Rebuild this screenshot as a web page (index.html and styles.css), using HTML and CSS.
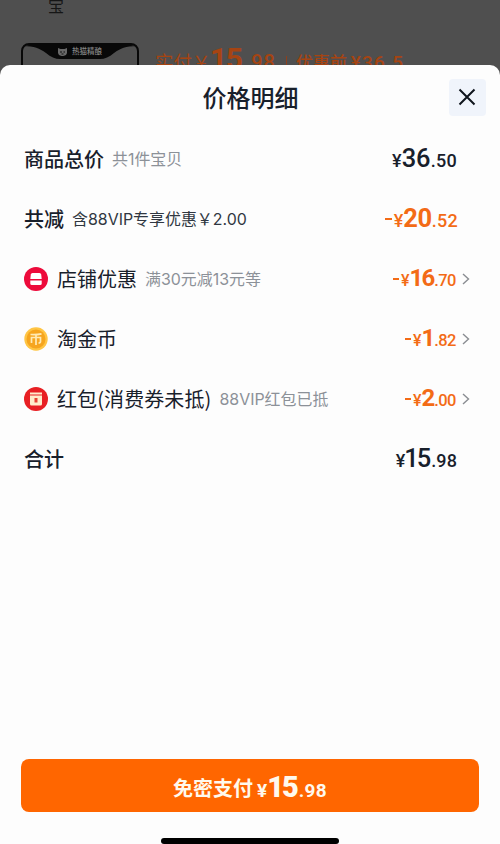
FILE: index.html
```html
<!DOCTYPE html>
<html lang="zh-CN">
<head>
<meta charset="utf-8">
<meta name="viewport" content="width=device-width, initial-scale=1">
<title>价格明细</title>
<link rel="stylesheet" href="styles.css">
</head>
<body>
<div class="screen">
  <header class="backdrop">
    <div class="address">宝</div>
    <div class="product">
      <div class="thumb">
        <svg class="notch" viewBox="0 0 118 24" width="118" height="24"><path d="M0 0H118V1C105 1 100 3 93 8C88 12 84 14 79 14H39C34 14 30 12 25 8C18 3 13 1 0 1Z" fill="#080808"/><path d="M37 3L39.500 4H43.500L46 3V7.500C46 10 43.500 11 41.500 11S37 10 37 7.500Z" fill="#686868"/><path d="M39 7H41M42.500 7H44M40.500 9H42.500" stroke="#111"/></svg>
        <span class="thumb-label">热猫精酿</span>
      </div>
      <div class="paid"><span class="paid-label">实付￥</span><span class="paid-int">15</span><span class="paid-dec">.98</span><span class="bar"></span><span class="before">优惠前 <i>¥36.5</i></span></div>
    </div>
  </header>
  <main class="sheet">
    <div class="head">
      <h1>价格明细</h1>
      <button class="close" aria-label="关闭"><svg width="18" height="18" viewBox="0 0 18 18"><path d="M1.500 1.500L16.500 16.500M16.500 1.500L1.500 16.500" stroke="#10151d" stroke-width="2"/></svg></button>
    </div>
    <div class="rows">
      <div class="row"><span class="name strong">商品总价</span><span class="note">共1件宝贝</span><span class="price"><i class="yen">¥</i><b>36</b><i class="dec">.50</i></span></div>
      <div class="row"><span class="name strong">共减</span><span class="note dark">含88VIP专享优惠￥2.00</span><span class="price off large"><i class="minus"></i><i class="yen">¥</i><b>20</b><i class="dec">.52</i></span></div>
      <div class="row"><svg class="icon" viewBox="0 0 24 24"><circle cx="12" cy="12" r="12" fill="#ed0b3b"/><path d="M8.500 6H15.500Q17 6 17.200 7.500L17.700 12H6.300L6.800 7.500Q7 6 8.500 6Z" fill="#fff"/><path d="M6.300 13.500H17.700V16.500Q17.700 18 16.200 18H7.800Q6.300 18 6.300 16.500Z" fill="#fff"/></svg><span class="name">店铺优惠</span><span class="note">满30元减13元等</span><span class="price off small"><i class="minus"></i><i class="yen">¥</i><b>16</b><i class="dec">.70</i></span><svg class="arrow" viewBox="0 0 8 12"><path d="M1 1L6.500 6L1 11"/></svg></div>
      <div class="row"><svg class="icon" viewBox="0 0 24 24"><circle cx="12" cy="12" r="11.700" fill="#ffc544"/><circle cx="12" cy="12" r="9.500" fill="#f6a51e"/><path d="M6.500 7.500Q12 8 17.500 6.800M7.500 16V10.500H16.500V14.500Q16.500 16 14.500 16M12 8V18" fill="none" stroke="#ffeab5" stroke-width="1.700"/></svg><span class="name">淘金币</span><span class="price off small"><i class="minus"></i><i class="yen">¥</i><b>1</b><i class="dec">.82</i></span><svg class="arrow" viewBox="0 0 8 12"><path d="M1 1L6.500 6L1 11"/></svg></div>
      <div class="row"><svg class="icon" viewBox="0 0 24 24"><circle cx="12" cy="12" r="12" fill="#e82024"/><path d="M6 5.500H18V7.500H6ZM6 8.500H18V17Q18 18.500 16.500 18.500H7.500Q6 18.500 6 17Z" fill="#ffedcc"/><path d="M10.500 11H13.500V15.500H10.500Z" fill="#e84436"/></svg><span class="name wide">红包(消费券未抵)</span><span class="note">88VIP红包已抵</span><span class="price off small"><i class="minus"></i><i class="yen">¥</i><b>2</b><i class="dec">.00</i></span><svg class="arrow" viewBox="0 0 8 12"><path d="M1 1L6.500 6L1 11"/></svg></div>
      <div class="row"><span class="name strong">合计</span><span class="price total"><i class="yen">¥</i><b>15</b><i class="dec">.98</i></span></div>
    </div>
    <button class="pay"><span>免密支付</span><span class="pay-price"><i class="yen">¥</i><b>15</b><i class="dec">.98</i></span></button>
    <div class="home"></div>
  </main>
</div>
</body>
</html>
```
FILE: styles.css
```css
* { box-sizing: border-box; }
body { margin: 0; font-family: "Noto Sans CJK SC", sans-serif; color: #18202b; background: #4f4f4f; }
h1 { margin: 0; }
i { font-style: normal; }
button { border: 0; padding: 0; font: inherit; color: inherit; }
.screen { height: 844px; overflow: hidden; display: flex; flex-direction: column; background: #4f4f4f; }
.backdrop { height: 65px; flex: none; overflow: visible; }
.address { height: 43px; padding-left: 48px; font-size: 16px; line-height: 10px; color: #161616; }
.product { height: 40px; display: flex; }
.thumb { position: relative; width: 118px; height: 50px; margin-left: 21px; border: 2px solid #080808; border-radius: 8px 8px 0 0; overflow: hidden; flex: none; }
.notch { display: block; margin-left: -2px; }
.thumb-label { position: absolute; left: 49px; top: 1px; font-size: 7.5px; line-height: 10px; font-weight: 500; color: #858585; white-space: nowrap; }
.paid { display: flex; align-items: baseline; height: 34px; margin-left: 16px; padding-top: 1px; color: #a64412; line-height: 34px; white-space: nowrap; }
.paid-label { font-size: 18.5px; width: 54px; }
.paid-int { font: 700 30px/30px Roboto, sans-serif; width: 32px; margin-left: 1px; letter-spacing: -1.5px; }
.paid-dec { font: 500 20px/30px Roboto, sans-serif; width: 39px; padding-left: 3px; letter-spacing: .8px; }
.bar { width: 1px; height: 13px; background: #8e401c; margin: 0 9px 0 5px; }
.before { font-size: 17px; font-weight: 500; }
.before i { font-family: Roboto, sans-serif; font-size: 19px; letter-spacing: 1.1px; }
.sheet { position: relative; flex: 1; display: flex; flex-direction: column; background: #fdfdfd; border-radius: 10px 10px 0 0; }
.head { height: 64px; display: flex; align-items: center; padding-right: 14px; flex: none; }
.head h1 { flex: 1; padding-left: 52px; text-align: center; font-size: 24px; font-weight: 500; line-height: 34px; }
.close { width: 37px; height: 37px; display: flex; align-items: center; justify-content: center; background: #f0f4fb; border-radius: 4px; padding-right: 1px; }
.row { height: 60px; display: flex; align-items: center; padding: 0 30px 0 24px; white-space: nowrap; }
.name { font-size: 20px; line-height: 30px; }
.wide { letter-spacing: .1px; }
.strong { font-weight: 500; }
.note { margin-left: 8px; font-family: Inter, "Noto Sans CJK SC", sans-serif; font-size: 15.95px; line-height: 24px; color: #8c9198; padding-top: 2px; }
.dark { color: #303741; }
.icon { width: 24px; height: 24px; margin-right: 9px; flex: none; }
.price { width: 90px; margin-left: auto; margin-right: 13px; display: flex; justify-content: flex-end; align-items: baseline; font-family: Roboto, sans-serif; line-height: 30px; }
.price b { font-size: 25.5px; font-weight: 500; }
.yen { font-size: 18px; font-weight: 500; }
.dec { font-size: 18px; font-weight: 500; letter-spacing: .3px; }
.off { color: #f36b16; }
.price.off b { font-weight: 700; letter-spacing: -.5px; }
.large { margin-right: 12px; }
.minus { width: 7px; height: 2px; background: currentColor; margin-right: 2px; align-self: center; }
.small .minus { width: 6px; }
.price.small b { font-size: 24px; letter-spacing: -2px; margin-right: 1px; }
.small .yen { font-size: 16px; }
.small .dec { font-size: 16.5px; letter-spacing: -.5px; }
.price.total b { letter-spacing: -2px; margin: 0 2px 0 -1px; }
.total .dec { letter-spacing: .1px; }
.row:has(.arrow) .price { margin-right: 6px; }
.arrow { width: 8px; height: 12px; fill: none; stroke: #8a8d92; stroke-width: 1.4; flex: none; }
.pay { height: 53px; margin: auto 21px 26px; border-radius: 8px; background: #ff6600; color: #fff9ed; display: flex; align-items: center; justify-content: center; font-size: 20px; font-weight: 700; padding: 3px 0 0; }
.pay-price { display: flex; align-items: baseline; margin-left: 4px; font-family: Roboto, sans-serif; }
.pay-price b { font-size: 29px; letter-spacing: -2px; }
.pay-price i { font-size: 19px; font-weight: 700; }
.pay-price .dec { margin-left: 2px; }
.home { width: 178px; height: 6px; background: #000; border-radius: 3px; margin: 0 auto; flex: none; }
```
